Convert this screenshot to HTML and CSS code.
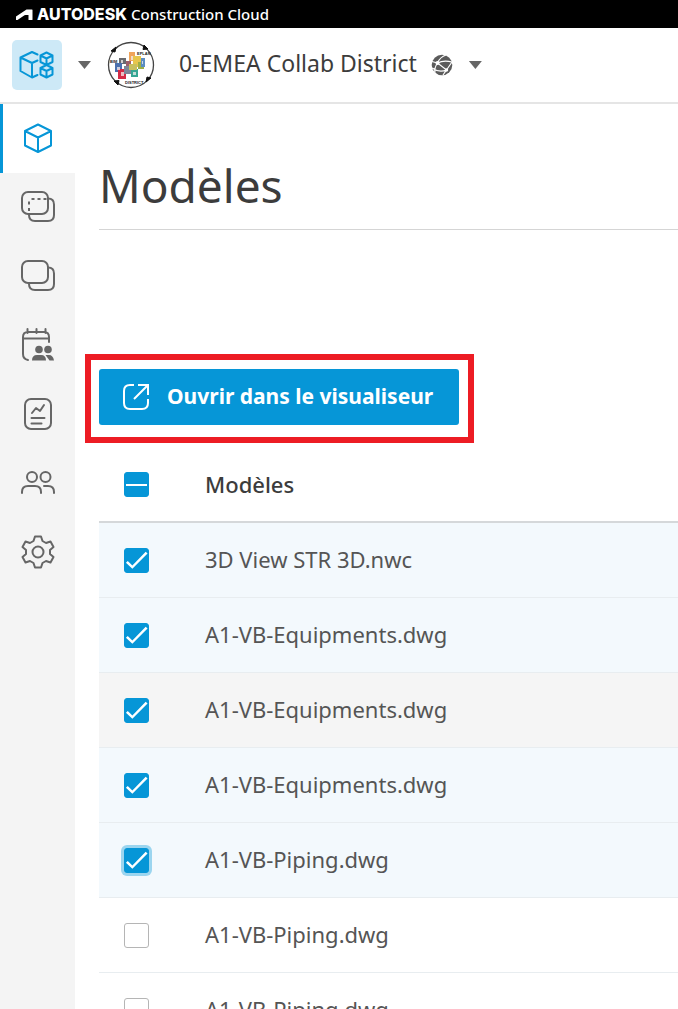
FILE: index.html
```html
<!DOCTYPE html>
<html lang="fr">
<head>
<meta charset="utf-8">
<meta name="viewport" content="width=device-width, initial-scale=1">
<title>Modèles</title>
<link rel="stylesheet" href="styles.css">
</head>
<body>
<div class="topbar">
  <svg class="brand-mark" viewBox="0 0 17 13" aria-hidden="true"><path fill="#fff" d="M0 12V8.500L10.500 1.500H16Q16.500 1.500 16.500 2V11.500Q16.500 12 16 12H12.500V7H9.500Q9 7 8.500 7.300L1.500 12Z"/></svg>
  <span class="brand">AUTODESK</span>
  <span class="product">Construction Cloud</span>
</div>
<header class="header">
  <button class="app-button" aria-label="Applications">
    <svg viewBox="0 0 36 30" class="line-icon"><path d="M18.500 4.500 13 2 1.500 7.500V21L13 27.500 18.500 25M1.500 7.500 13 13l5.500-2.500M13 13V27.500"/><path d="m27.500 2.500 6 3V12l-6 3-6-3V5.500ZM21.500 5.500l6 3 6-3M27.500 8.500V15M27.500 15l6 3v6.500l-6 3-6-3V18ZM21.500 18l6 3 6-3M27.500 21v6.500"/></svg>
  </button>
  <button class="caret" aria-label="Changer d’application"></button>
  <svg class="project-logo" viewBox="0 0 48 48" aria-hidden="true">
    <circle cx="24" cy="24" r="22.500" fill="#fff" stroke="#444" stroke-width="1.300"/>
    <path d="m4 10 5-4-1 5ZM37 4l4 4-5 .500ZM44 37l-5 4 1-5ZM11 44l-4-4 5-.500Z" fill="#111" stroke="#111"/>
    <path d="M22 11h6v9h-6Z" fill="#f0a45b"/><path d="M26 15h8v11h-8Z" fill="#e7c64c"/><path d="M31 21h6v7h-6Z" fill="#9cae47"/><path d="M34 17h4v9h-4Z" fill="#5b8dc2"/><path d="M12 17h7v6h-7Z" fill="#696b70"/><path d="M19 20h5v9h-5Z" fill="#9d5f6b"/><path d="M8 22h7v9H8Z" fill="#4b6fae"/><path d="M11 28h8v10h-8Z" fill="#d52b46"/><path d="M17 25h8v8h-8Z" fill="#7d8699"/><path d="M24 28h7v8h-7Z" fill="#36a694"/><path d="M22 23h8v6h-8Z" fill="#c8c05f"/>
    <path d="M10 26h3v3h-3ZM14 31h3v4h-3ZM26 31h3v3h-3ZM14 19h2v3h-2ZM24 15h2v4h-2ZM35 20h1v3h-1Z" fill="#f5eeee" opacity=".75"/>
    <g class="logo-text"><text x="3" y="22">BIM</text><text x="30" y="14">EPLAN</text><text x="18" y="43">DISTRICT</text></g>
  </svg>
  <span class="project-name">0-EMEA Collab District</span>
  <svg class="globe" viewBox="0 0 22 22" aria-hidden="true"><circle cx="11" cy="11" r="10.300" fill="#5b5b5b"/><path d="M1 7.500 6.500 9Q9 3 15 1M6.500 9q6-3 14.500-1M6.500 9l9 7L21 8M6.500 9Q3 14 4 19M1 14q7 5 14.500 2M15.500 16 12 21" fill="none" stroke="#fff" stroke-width="1.200"/><circle cx="6.500" cy="9" r="2" fill="#fff"/><circle cx="15.500" cy="16" r="1.700" fill="#fff"/></svg>
  <button class="caret" aria-label="Changer de projet"></button>
</header>
<div class="shell">
  <nav class="sidebar" aria-label="Navigation">
    <a href="#" class="nav-item active" aria-label="Modèles" aria-current="page"><svg class="line-icon" viewBox="0 0 36 36"><path d="m18 4.500 13 6.500v14.500L18 32 5 25.500V11ZM5 11l13 6.500L31 11M18 17.500V32"/></svg></a>
    <a href="#" class="nav-item" aria-label="Vues"><svg class="line-icon" viewBox="0 0 36 36"><rect x="2" y="3" width="26" height="22" rx="6"/><path d="M28 9.500q6 0 6 6V26q0 6-6 6H15q-6 0-6-6v-1"/><path class="dashes" d="M9 22v-3M9 15.500v-3M11.500 10h3M17.500 10h3M23.500 10h3"/></svg></a>
    <a href="#" class="nav-item" aria-label="Coordination"><svg class="line-icon" viewBox="0 0 36 36"><rect x="2" y="3" width="26" height="22" rx="6"/><path d="M28 9.500q6 0 6 6V26q0 6-6 6H15q-6 0-6-6v-1"/></svg></a>
    <a href="#" class="nav-item" aria-label="Réunions"><svg class="line-icon" viewBox="0 0 36 36"><path d="M8 33q-5-1-5-6V10q0-5 5-5h16q5 0 5 5v5M3 11.500h26M7.500 2v4m9-4v4m9-4v4"/><g class="solid"><circle cx="19" cy="22.500" r="3.800"/><circle cx="28" cy="22.500" r="3.800"/><path d="M12 33.500q0-5.500 5-5.500h4q5 0 5 5.500ZM25.500 28 29.500 33.500H34q-1-5.500-5-5.500Z"/></g></svg></a>
    <a href="#" class="nav-item" aria-label="Rapports"><svg class="line-icon" viewBox="0 0 36 36"><rect x="5" y="3" width="26" height="30" rx="6"/><path d="m12 17 4-5 4 3 4-6M11.500 22h13M11.500 27.500h10"/></svg></a>
    <a href="#" class="nav-item" aria-label="Membres"><svg class="line-icon" viewBox="0 0 36 36"><circle cx="12" cy="12" r="5"/><circle cx="25.500" cy="12" r="5"/><path d="M2 28v-1q0-6 6-6h7q6 0 6 6v1M24 21h4q6 0 6 6v1"/></svg></a>
    <a href="#" class="nav-item" aria-label="Paramètres"><svg class="line-icon" viewBox="0 0 36 36"><circle cx="18" cy="18" r="5.500"/><path d="M15 2.500h6l1.500 4.500 3.500 2 4.500-1.500 3 5.500-3.500 3v4l3.500 3-3 5.500L26 27l-3.500 2L21 33.500h-6L13.500 29 10 27l-4.500 1.500-3-5.500L6 20v-4l-3.500-3 3-5.500L10 9l3.500-2Z"/></svg></a>
  </nav>
  <main class="main">
    <h1 class="title">Modèles</h1>
    <div class="callout">
      <button class="open-button">
        <svg class="open-icon" viewBox="0 0 26 26" aria-hidden="true"><path d="M11 1H7Q1 1 1 7v12q0 6 6 6h12q6 0 6-6v-4M15 1h10v10M25 1 11 15"/></svg>
        <span class="open-label">Ouvrir dans le visualiseur</span>
      </button>
    </div>
    <table class="models">
      <thead>
        <tr><th class="select-cell"><input type="checkbox" class="check partial" aria-label="Tout sélectionner"></th><th scope="col">Modèles</th></tr>
      </thead>
      <tbody>
        <tr class="selected"><td class="select-cell"><input type="checkbox" class="check" id="m1" checked></td><td><label for="m1">3D View STR 3D.nwc</label></td></tr>
        <tr class="selected"><td class="select-cell"><input type="checkbox" class="check" id="m2" checked></td><td><label for="m2">A1-VB-Equipments.dwg</label></td></tr>
        <tr class="hovered"><td class="select-cell"><input type="checkbox" class="check" id="m3" checked></td><td><label for="m3">A1-VB-Equipments.dwg</label></td></tr>
        <tr class="selected"><td class="select-cell"><input type="checkbox" class="check" id="m4" checked></td><td><label for="m4">A1-VB-Equipments.dwg</label></td></tr>
        <tr class="selected"><td class="select-cell"><input type="checkbox" class="check focused" id="m5" checked></td><td><label for="m5">A1-VB-Piping.dwg</label></td></tr>
        <tr><td class="select-cell"><input type="checkbox" class="check" id="m6"></td><td><label for="m6">A1-VB-Piping.dwg</label></td></tr>
        <tr><td class="select-cell"><input type="checkbox" class="check" id="m7"></td><td><label for="m7">A1-VB-Piping.dwg</label></td></tr>
      </tbody>
    </table>
  </main>
</div>
</body>
</html>
```

FILE: styles.css
```css
* { box-sizing: border-box; }

body {
  margin: 0;
  height: 100vh;
  display: flex;
  flex-direction: column;
  overflow: hidden;
  background: #fff;
  color: #3c3c3c;
  font-family: "Noto Sans", sans-serif;
}

button { border: 0; padding: 0; font: inherit; cursor: pointer; }

.topbar {
  display: flex;
  align-items: center;
  flex: none;
  height: 28px;
  padding-left: 16px;
  background: #000;
  color: #fff;
  line-height: 28px;
  white-space: nowrap;
}
.brand-mark { width: 17px; height: 13px; margin-right: 4px; }
.brand { font-family: Inter, sans-serif; font-size: 16px; font-weight: 800; margin-right: 4px; }
.product { font-size: 15px; font-weight: 500; }

.header {
  display: flex;
  align-items: center;
  flex: none;
  height: 76px;
  padding-left: 12px;
  border-bottom: 2px solid #e5e5e5;
}
.app-button {
  display: grid;
  place-items: center;
  width: 50px;
  height: 50px;
  border-radius: 5px;
  background: #cde9f7;
  color: #0696d7;
}
.app-button svg { width: 36px; height: 30px; }
.caret {
  width: 13px;
  height: 8px;
  margin: 0 16px;
  background: #666;
  clip-path: polygon(0 0, 100% 0, 50% 100%);
}
.project-logo { width: 48px; height: 48px; margin-right: 24px; }
.logo-text { font: bold 4px "Liberation Sans", sans-serif; fill: #222; }
.project-name { padding-bottom: 4px; font-size: 23px; white-space: nowrap; }
.globe { width: 22px; height: 22px; margin-left: 14px; }

.line-icon {
  fill: none;
  stroke: currentColor;
  stroke-width: 2;
  stroke-linecap: round;
  stroke-linejoin: round;
}
.dashes { stroke-linecap: butt; }
.solid { fill: currentColor; stroke: none; }

.shell { display: flex; flex: 1; min-height: 0; }
.sidebar { flex: none; width: 75px; background: #f4f4f4; }
.nav-item {
  display: grid;
  place-items: center;
  height: 69px;
  padding-bottom: 2px;
  color: #666;
}
.nav-item svg { width: 36px; height: 36px; }
.nav-item.active {
  background: #fff;
  color: #0696d7;
  box-shadow: inset 3px 0 #0696d7;
}

.main { flex: 1; min-width: 0; padding-left: 24px; overflow: hidden; }
.title {
  margin: 0;
  padding: 51px 0 13px;
  border-bottom: 1px solid #d5d5d5;
  font-size: 46px;
  line-height: 61px;
  font-weight: 400;
}

.callout {
  width: fit-content;
  margin: 124px 0 5px -14px;
  padding: 9px 9px 12px 8px;
  border: 6px solid #ed1c24;
}
.open-button {
  display: flex;
  align-items: center;
  gap: 18px;
  height: 56px;
  padding: 0 26px 0 24px;
  border-radius: 3px;
  background: #0696d7;
  color: #fff;
  font-size: 21px;
  font-weight: 700;
  white-space: nowrap;
}
.open-label { padding-bottom: 3px; }
.open-icon { width: 26px; height: 26px; fill: none; stroke: #fff; stroke-width: 2; }

.models { width: 100%; border-collapse: separate; border-spacing: 0; font-size: 22px; }
.models th, .models td {
  height: 75px;
  padding: 0 0 2px;
  border-bottom: 1px solid #e8edf0;
  text-align: left;
  line-height: 30px;
}
.models th { border-bottom: 2px solid #d5d8da; font-weight: 500; }
.models td { color: #555; }
.models .select-cell { width: 106px; padding: 0 0 0 25px; }
.selected { background: #f3f9fd; }
.hovered { background: #f5f5f5; }

.check {
  appearance: none;
  display: grid;
  width: 25px;
  height: 25px;
  margin: 0;
  border: 1px solid #b5b5b5;
  border-radius: 3px;
  background: #fff;
}
.check:checked, .check.partial { border-color: #0696d7; background: #0696d7; }
.check::before { content: ""; }
.check:checked::before {
  background: #fff;
  clip-path: polygon(4% 62%, 12% 54%, 32% 74%, 90% 14%, 98% 22%, 32% 88%);
}
.check.partial::before { height: 2px; margin: 0 1px; align-self: center; background: #fff; }
.check.focused { box-shadow: 0 0 0 3px #9bd5ef; }
```
